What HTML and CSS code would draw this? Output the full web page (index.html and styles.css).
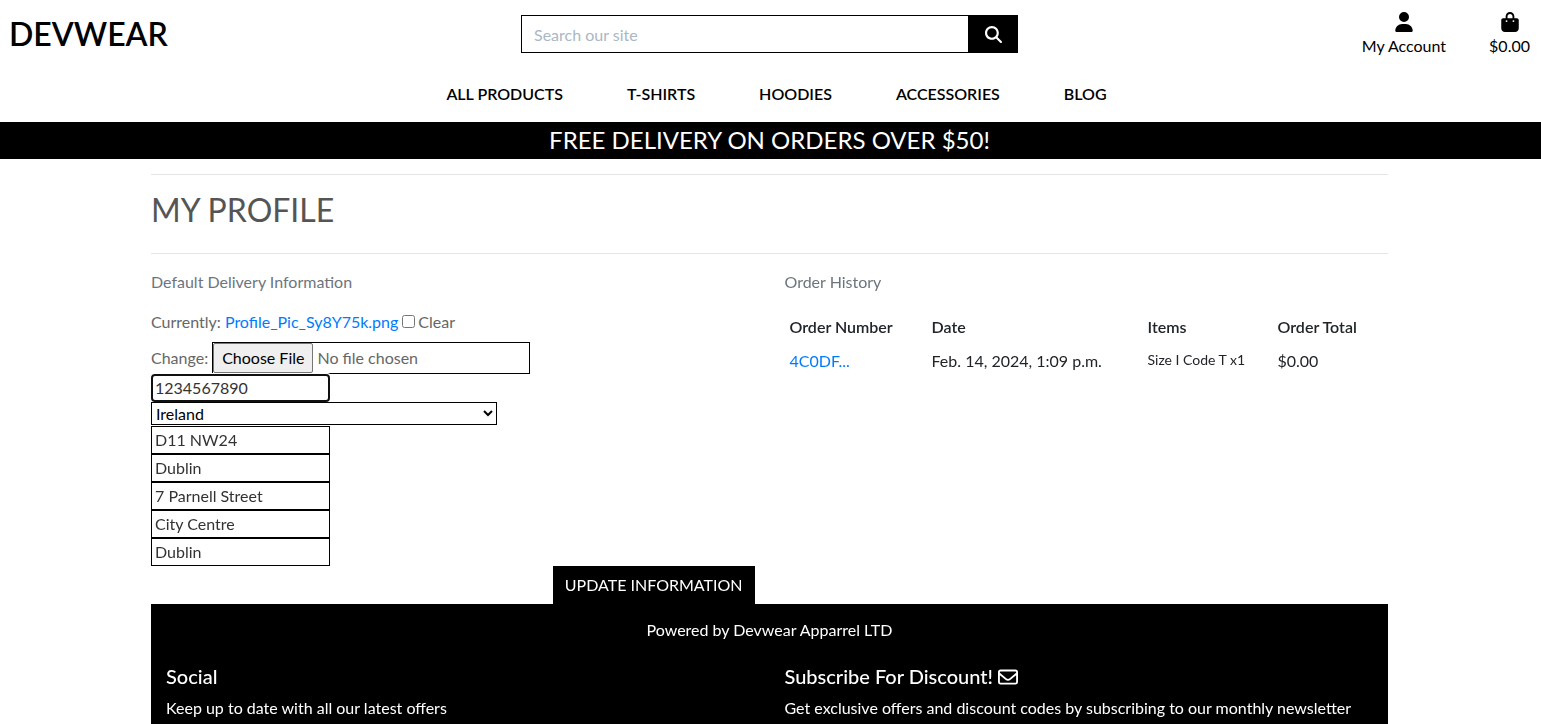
FILE: index.html
```html
<!DOCTYPE html>
<html lang="en">
<head>
<meta charset="utf-8">
<meta name="viewport" content="width=device-width, initial-scale=1">
<title>Devwear - My Profile</title>
<link rel="stylesheet" href="styles.css">
</head>
<body>
<header>
  <div class="topbar">
    <a class="logo" href="#">DEVWEAR</a>
    <form class="search" role="search">
      <input class="search-input" type="search" placeholder="Search our site" aria-label="Search our site">
      <button class="search-button" type="button" aria-label="Search">
        <svg class="icon-search" viewBox="0 0 512 512" aria-hidden="true"><path d="M416 208c0 45.900-14.900 88.300-40 122.700L502.600 457.400c12.500 12.500 12.500 32.800 0 45.300s-32.800 12.500-45.300 0L330.700 376c-34.400 25.200-76.800 40-122.700 40C93.100 416 0 322.900 0 208S93.100 0 208 0S416 93.100 416 208zM208 352a144 144 0 1 0 0-288 144 144 0 1 0 0 288z"/></svg>
      </button>
    </form>
    <div class="account-links">
      <a class="account-link" href="#">
        <svg class="icon-link" viewBox="0 0 448 512" aria-hidden="true"><path d="M224 256A128 128 0 1 0 224 0a128 128 0 1 0 0 256zm-45.700 48C79.800 304 0 383.800 0 482.300C0 498.700 13.300 512 29.700 512H418.300c16.400 0 29.700-13.300 29.700-29.700C448 383.800 368.200 304 269.700 304H178.300z"/></svg>
        <span>My Account</span>
      </a>
      <a class="account-link" href="#">
        <svg class="icon-link" viewBox="0 0 448 512" aria-hidden="true"><path d="M160 112c0-35.300 28.700-64 64-64s64 28.700 64 64v48H160V112zm-48 48H48c-26.500 0-48 21.500-48 48V416c0 53 43 96 96 96H352c53 0 96-43 96-96V208c0-26.500-21.500-48-48-48H336V112C336 50.100 285.900 0 224 0S112 50.100 112 112v48zm24 48a24 24 0 1 1 0 48 24 24 0 1 1 0-48zm152 24a24 24 0 1 1 48 0 24 24 0 1 1 -48 0z"/></svg>
        <span>$0.00</span>
      </a>
    </div>
  </div>
  <nav class="main-nav">
    <a href="#">ALL PRODUCTS</a>
    <a href="#">T-SHIRTS</a>
    <a href="#">HOODIES</a>
    <a href="#">ACCESSORIES</a>
    <a href="#">BLOG</a>
  </nav>
  <div class="banner">FREE DELIVERY ON ORDERS OVER $50!</div>
</header>
<div class="container">
  <main>
    <div class="title-block"><h1>MY PROFILE</h1></div>
    <div class="columns">
      <section>
        <p class="muted">Default Delivery Information</p>
        <form class="profile-form">
          <div class="current-picture">
            <span>Currently: <a href="#">Profile_Pic_Sy8Y75k.png</a></span>
            <input id="clear" class="clear-box" type="checkbox"><label for="clear">Clear</label>
          </div>
          <div class="change-picture">
            <label for="picture">Change:</label>
            <input id="picture" class="file-input" type="file">
          </div>
          <input class="field" type="text" value="1234567890" aria-label="Phone number" autofocus>
          <select class="country" aria-label="Country"><option>Ireland</option></select>
          <input class="field" type="text" value="D11 NW24" aria-label="Postal code">
          <input class="field" type="text" value="Dublin" aria-label="Town or city">
          <input class="field" type="text" value="7 Parnell Street" aria-label="Street address 1">
          <input class="field" type="text" value="City Centre" aria-label="Street address 2">
          <input class="field" type="text" value="Dublin" aria-label="County">
          <button class="update-button" type="button">UPDATE INFORMATION</button>
        </form>
      </section>
      <section>
        <p class="muted">Order History</p>
        <table class="orders">
          <thead>
            <tr><th class="col-number">Order Number</th><th class="col-date">Date</th><th class="col-items">Items</th><th>Order Total</th></tr>
          </thead>
          <tbody>
            <tr><td><a href="#">4C0DF...</a></td><td>Feb. 14, 2024, 1:09 p.m.</td><td class="item">Size I Code T x1</td><td>$0.00</td></tr>
          </tbody>
        </table>
      </section>
    </div>
  </main>
  <footer>
    <p class="powered">Powered by Devwear Apparrel LTD</p>
    <div class="footer-columns">
      <section>
        <h2>Social</h2>
        <p>Keep up to date with all our latest offers</p>
      </section>
      <section>
        <h2>Subscribe For Discount! <svg class="icon-mail" viewBox="0 0 512 512" aria-hidden="true"><path d="M64 112c-8.800 0-16 7.200-16 16v22.100L220.500 291.700c20.700 17 50.400 17 71.100 0L464 150.100V128c0-8.800-7.200-16-16-16H64zM48 212.200V384c0 8.800 7.200 16 16 16H448c8.800 0 16-7.200 16-16V212.200L322 328.800c-38.400 31.500-93.700 31.500-132 0L48 212.200zM0 128C0 92.700 28.700 64 64 64H448c35.300 0 64 28.700 64 64V384c0 35.300-28.700 64-64 64H64c-35.300 0-64-28.700-64-64V128z"/></svg></h2>
        <p>Get exclusive offers and discount codes by subscribing to our monthly newsletter</p>
      </section>
    </div>
  </footer>
</div>
</body>
</html>
```
FILE: styles.css
```css
*, *::before, *::after { box-sizing: border-box; }
html { overflow-x: hidden; scrollbar-width: none; }
body {
  margin: 0;
  background: #fff;
  color: #212529;
  font: 400 16px/24px Lato, sans-serif;
}
h1, h2, p { margin: 0; }
a { color: #007bff; text-decoration: none; }
input, select, button { font: inherit; margin: 0; border-radius: 0; }
svg { fill: currentColor; }

.topbar {
  display: grid;
  grid-template-columns: 1fr minmax(200px, 497px) 1fr;
  align-items: start;
  padding: 11px 11px 0 9px;
}
.logo { color: #000; font-size: 32px; line-height: 46px; font-weight: 600; }
.search { display: flex; padding-top: 4px; }
.search-input {
  flex: 1;
  min-width: 0;
  height: 38px;
  padding: 6px 12px;
  border: 1px solid #000;
  border-right: 0;
  background: #fff;
  appearance: none;
}
.search-input::placeholder { color: #aab7c4; }
.search-button {
  display: grid;
  place-items: center;
  width: 50px;
  height: 38px;
  padding: 0;
  border: 0;
  background: #000;
  color: #fff;
}
.icon-search { width: 17px; height: 17px; }
.account-links { display: flex; justify-content: flex-end; gap: 43px; }
.account-link { display: flex; flex-direction: column; align-items: center; color: #000; }
.icon-link { width: 20px; height: 20px; margin: 1px 0 2px; }

.main-nav {
  display: flex;
  justify-content: center;
  gap: 64px;
  padding: 24px 0 16px 12px;
}
.main-nav a { color: #000; font-weight: 600; }
.banner {
  padding: 0 2px 1px 0;
  background: #000;
  color: #fff;
  font-size: 24px;
  line-height: 36px;
  text-align: center;
}

.container { padding: 15px 153px 0 151px; }
.title-block {
  padding: 16px 0 24px;
  border: solid #e5e5e5;
  border-width: 1px 0;
}
h1 { color: #555; font-size: 32px; line-height: 38px; font-weight: 400; }
.columns { display: grid; grid-template-columns: 1fr 1fr; gap: 30px; padding-top: 16px; }
.muted { margin-bottom: 16px; color: #6c757d; }
.profile-form { display: flex; flex-direction: column; align-items: flex-start; color: #666; }
.current-picture { display: flex; align-items: center; margin-bottom: 8px; }
.clear-box { width: 13px; height: 13px; margin: 0 3px 2px 4px; }
.change-picture { display: flex; align-items: center; gap: 4px; }
.file-input { width: 318px; height: 32px; border: 1px solid #000; line-height: 30px; }
.file-input::file-selector-button {
  height: 30px;
  margin: 0 4px 0 0;
  padding: 1px 8px;
  border: 1px solid #767676;
  border-radius: 2px;
  background: #efefef;
  color: #000;
  font: inherit;
  line-height: 24px;
}
.field {
  width: 179px;
  height: 28px;
  padding: 0 2px 2px 3px;
  border: 1px solid #000;
  background: #fff;
  color: #333;
}
.country {
  width: 346px;
  height: 23px;
  margin-bottom: 1px;
  border: 1px solid #000;
  background: #fff;
  color: #000;
}
.update-button {
  align-self: flex-end;
  padding: 7px 12px;
  border: 0;
  background: #000;
  color: #fff;
}
.orders { width: 100%; border-collapse: collapse; }
.orders th, .orders td { padding: 5px; text-align: left; vertical-align: top; }
.orders th { font-weight: 600; }
.orders .item { font-size: 14px; line-height: 21px; }
.col-number { width: 142px; }
.col-date { width: 216px; }
.col-items { width: 130px; }

footer { padding: 14px 15px 16px; background: #000; color: #fff; }
.powered { text-align: center; }
.footer-columns { display: grid; grid-template-columns: 1fr 1fr; gap: 30px; padding-top: 22px; }
h2 { margin-bottom: 8px; font-size: 20px; line-height: 24px; font-weight: 500; }
.icon-mail { width: 20px; height: 20px; vertical-align: -3px; }
```
